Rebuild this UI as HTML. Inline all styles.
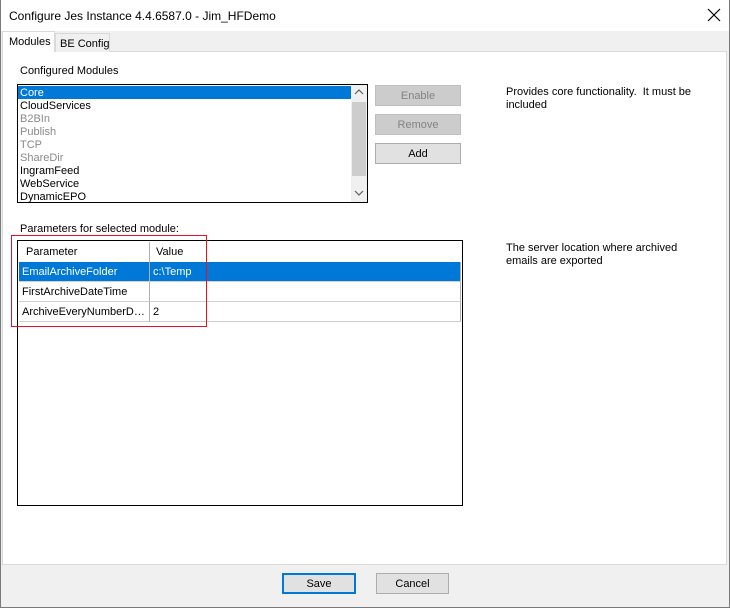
<!DOCTYPE html>
<html><head><style>
*{box-sizing:border-box;margin:0;padding:0}
body{width:730px;height:608px;background:#f0f0f0;font-family:"Liberation Sans",sans-serif;font-size:11px;color:#000;position:relative;overflow:hidden}
.a{position:absolute;white-space:nowrap}
.btn{position:absolute;background:#e1e1e1;border:1px solid #adadad;text-align:center;line-height:20px}
.dis{background:#cccccc;border-color:#bfbfbf;color:#838383}
.row{position:absolute;left:0;height:13px;line-height:14px;padding-left:2px;width:333px}
.g{color:#8a8a8a}
.cell{position:absolute;height:20px;line-height:20px;padding-left:3px;border-right:1px solid #b0b0b0;border-bottom:1px solid #d0d0d0;white-space:nowrap;overflow:hidden}
</style></head><body>
<div class="a" style="left:0;top:0;width:730px;height:608px;border:1px solid #7a7a7a;border-top:none"></div>
<div class="a" style="left:1px;top:0;width:728px;height:31px;background:#fff"></div>
<div class="a" style="left:9px;top:9px;font-size:12px">Configure Jes Instance 4.4.6587.0 - Jim_HFDemo</div>
<svg class="a" style="left:707px;top:8px" width="14" height="14"><path d="M1 1L13 13M13 1L1 13" stroke="#000" stroke-width="1.2"/></svg>
<div class="a" style="left:2px;top:51px;width:725px;height:514px;background:#fff;border:1px solid #d9d9d9"></div>
<div class="a" style="left:55px;top:33px;width:55px;height:19px;border:1px solid #d9d9d9;border-bottom:none;background:#f0f0f0;padding:4px 0 0 4px">BE Config</div>
<div class="a" style="left:2px;top:31px;width:53px;height:21px;background:#fff;border:1px solid #d9d9d9;border-bottom:none;padding:4px 0 0 6px">Modules</div>
<div class="a" style="left:20px;top:65px">Configured Modules</div>
<div class="a" style="left:17px;top:84px;width:351px;height:119px;border:1px solid #000;background:#fff;overflow:hidden">
<div class="row" style="top:1px;background:#0078d7;color:#fff">Core</div>
<div class="row" style="top:14px">CloudServices</div>
<div class="row g" style="top:27px">B2BIn</div>
<div class="row g" style="top:40px">Publish</div>
<div class="row g" style="top:53px">TCP</div>
<div class="row g" style="top:66px">ShareDir</div>
<div class="row" style="top:79px">IngramFeed</div>
<div class="row" style="top:92px">WebService</div>
<div class="row" style="top:105px">DynamicEPO</div>
<div class="a" style="left:333px;top:0;width:16px;height:117px;background:#f0f0f0"></div>
<div class="a" style="left:334px;top:17px;width:14px;height:74px;background:#cdcdcd"></div>
<svg class="a" style="left:336px;top:3px" width="10" height="8"><path d="M1 6L5 2L9 6" stroke="#606060" fill="none" stroke-width="1.2"/></svg>
<svg class="a" style="left:336px;top:104px" width="10" height="8"><path d="M1 2L5 6L9 2" stroke="#606060" fill="none" stroke-width="1.2"/></svg>
</div>
<div class="btn dis" style="left:375px;top:85px;width:86px;height:21px">Enable</div>
<div class="btn dis" style="left:375px;top:114px;width:86px;height:21px">Remove</div>
<div class="btn" style="left:375px;top:143px;width:86px;height:21px">Add</div>
<div class="a" style="left:506px;top:86px;line-height:13px">Provides core functionality.&nbsp; It must be<br>included</div>
<div class="a" style="left:20px;top:223px">Parameters for selected module:</div>
<div class="a" style="left:17px;top:240px;width:446px;height:266px;border:1px solid #000;background:#fff">
<div class="cell" style="left:1px;top:1px;width:131px;padding-left:7px;border-bottom:none">Parameter</div>
<div class="cell" style="left:132px;top:1px;width:311px;border-right:none;border-bottom:none;padding-left:6px">Value</div>
<div class="a" style="left:1px;top:21px;width:442px;height:20px;background:#0078d7"></div>
<div class="cell" style="left:1px;top:21px;width:131px;color:#fff">EmailArchiveFolder</div>
<div class="cell" style="left:132px;top:21px;width:311px;color:#fff">c:\Temp</div>
<div class="cell" style="left:1px;top:41px;width:131px">FirstArchiveDateTime</div>
<div class="cell" style="left:132px;top:41px;width:311px"></div>
<div class="cell" style="left:1px;top:61px;width:131px">ArchiveEveryNumberD…</div>
<div class="cell" style="left:132px;top:61px;width:311px">2</div>
</div>
<div class="a" style="left:11px;top:235px;width:196px;height:92px;border:1px solid #e81123"></div>
<div class="a" style="left:506px;top:242px;line-height:13px">The server location where archived<br>emails are exported</div>
<div class="btn" style="left:282px;top:573px;width:74px;height:21px;border:2px solid #0078d7;line-height:18px">Save</div>
<div class="btn" style="left:376px;top:573px;width:73px;height:21px">Cancel</div>
</body></html>
